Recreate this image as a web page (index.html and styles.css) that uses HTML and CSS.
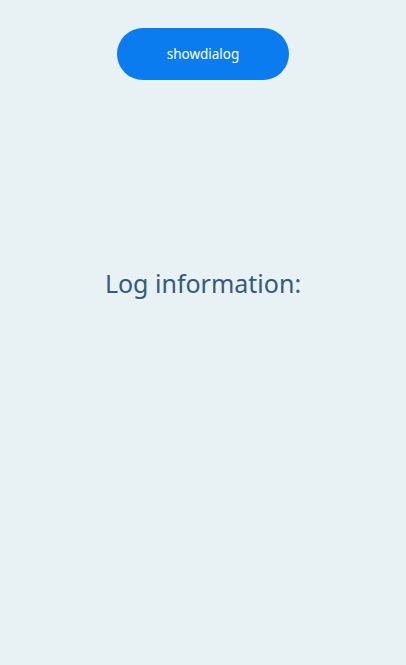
FILE: index.html
```html
<!DOCTYPE html>
<html>
<head>
<meta charset="utf-8">
<link rel="stylesheet" href="styles.css">
</head>
<body>
<main class="page">
  <button class="show-btn">showdialog</button>
  <p class="log">Log information:</p>
</main>
</body>
</html>
```
FILE: styles.css
```css
html, body {
  margin: 0;
  padding: 0;
  height: 100%;
}
body {
  background: #e8f1f4;
  font-family: "Noto Sans", "Open Sans", sans-serif;
}
.page {
  display: flex;
  flex-direction: column;
  align-items: center;
  padding-top: 28px;
}
.show-btn {
  width: 172px;
  height: 52px;
  border: none;
  border-radius: 26px;
  background: #0a7cf0;
  color: #ffffff;
  font-family: "Noto Sans", "Open Sans", sans-serif;
  font-size: 13.5px;
  padding: 0;
  margin: 0;
}
.log {
  margin: 186px 0 0;
  font-size: 25px;
  line-height: 35px;
  color: #335a7e;
}
```
